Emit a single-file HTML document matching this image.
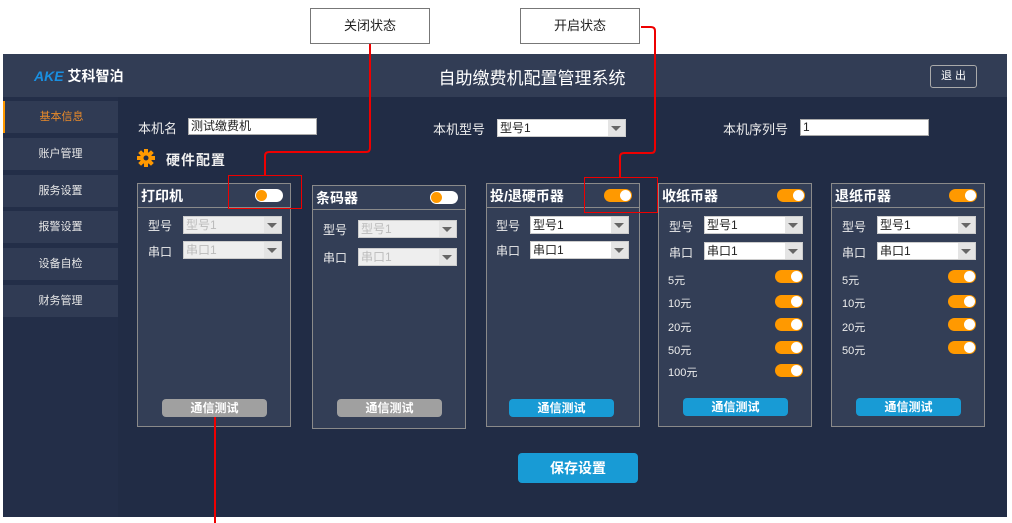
<!DOCTYPE html>
<html><head><meta charset="utf-8"><style>
*{margin:0;padding:0;box-sizing:border-box}
body{width:1012px;height:523px;background:#fff;position:relative;overflow:hidden;font-family:"Liberation Sans","Noto Sans CJK SC",sans-serif;color:#fff}
.a{position:absolute}
.app{left:3px;top:54px;width:1004px;height:463px;background:#212c45}
.hdr{left:3px;top:54px;width:1004px;height:43px;background:#323d55}
.side{left:3px;top:97px;width:115px;height:420px;background:#232e48}
.si{left:3px;width:115px;height:32px;background:#303b54;font-size:11px;text-align:center;line-height:32px;color:#e8e8e8}
.card{width:154px;height:244px;background:#333e56;border:1px solid #8a8a8a}
.card .t{position:absolute;left:0;top:0;width:100%;height:24px;border-bottom:1px solid #8a8a8a;font-size:14px;font-weight:bold;line-height:24px;padding-left:3px}
.tg{position:absolute;width:28px;height:13px;border-radius:7px;background:#f90}
.tg::after{content:"";position:absolute;top:1px;right:1px;width:11px;height:11px;border-radius:50%;background:#fff}
.tg.off{background:#fff}
.tg.off::after{left:1px;right:auto;background:#f90}
.lb{position:absolute;font-size:12px;color:#eee}
.sel{position:absolute;width:99px;height:18px;background:#fff;border:1px solid #ccc;color:#222;font-size:12px;line-height:16px;padding-left:2px}
.sel.dis{background:#eee;color:#bbb}
.sel::after{content:"";position:absolute;right:0;top:0;width:17px;height:16px;background:#e4e4e4}
.sel i{position:absolute;right:4px;top:6px;border-left:5px solid transparent;border-right:5px solid transparent;border-top:5px solid #666;z-index:2}
.btn{position:absolute;width:105px;height:18px;border-radius:4px;background:#189bd5;font-size:12px;font-weight:bold;text-align:center;line-height:18px}
.btn.g{background:#a0a0a0}
.inp{position:absolute;height:17px;background:#fff;border:1px solid #aaa;color:#222;font-size:12px;line-height:15px;padding-left:2px}
.cb{position:absolute;width:120px;height:36px;border:1px solid #777;background:#fff;color:#222;font-size:13px;text-align:center;line-height:34px}
</style></head><body>
<div class="a app"></div>
<div class="a hdr"></div>
<div class="a" style="left:34px;top:66px;font-size:14px;font-weight:bold;"><span style="color:#1a8fe0;font-style:italic">AKE</span> 艾科智泊</div>
<div class="a" style="left:26px;width:1012px;top:64px;text-align:center;font-size:17px;color:#fff">自助缴费机配置管理系统</div>
<div class="a" style="left:930px;top:65px;width:47px;height:23px;border:1px solid #aaa;border-radius:3px;font-size:11px;text-align:center;line-height:21px">退 出</div>
<div class="a side"></div>
<div class="a si" style="top:101px;color:#e88a2a;border-left:2px solid #f90">基本信息</div>
<div class="a si" style="top:138px">账户管理</div>
<div class="a si" style="top:175px">服务设置</div>
<div class="a si" style="top:211px">报警设置</div>
<div class="a si" style="top:248px">设备自检</div>
<div class="a si" style="top:285px">财务管理</div>

<div class="lb" style="left:138px;top:118px;font-size:13px">本机名</div>
<div class="inp" style="left:188px;top:118px;width:129px">测试缴费机</div>
<div class="lb" style="left:433px;top:119px;font-size:13px">本机型号</div>
<div class="sel" style="left:497px;top:119px;width:129px">型号1<i></i></div>
<div class="lb" style="left:723px;top:119px;font-size:13px">本机序列号</div>
<div class="inp" style="left:800px;top:119px;width:129px">1</div>
<svg class="a" style="left:137px;top:149px" width="18" height="18" viewBox="0 0 18 18"><g fill="#f90"><circle cx="9" cy="9" r="6"/><rect x="7" y="0" width="4" height="18"/><rect x="0" y="7" width="18" height="4"/><rect x="7" y="0" width="4" height="18" transform="rotate(45 9 9)"/><rect x="7" y="0" width="4" height="18" transform="rotate(-45 9 9)"/></g><circle cx="9" cy="9" r="2.5" fill="#212c45"/></svg>
<div class="lb" style="left:166px;top:150px;font-size:14px;font-weight:bold;letter-spacing:1px">硬件配置</div>

<div class="a card" style="left:137px;top:183px"><div class="t">打印机</div><div class="tg off" style="left:117px;top:5px"></div>
<div class="lb" style="left:10px;top:33px">型号</div><div class="sel dis" style="left:45px;top:32px">型号1<i></i></div>
<div class="lb" style="left:10px;top:59px">串口</div><div class="sel dis" style="left:45px;top:57px">串口1<i></i></div>
<div class="btn g" style="left:24px;top:215px">通信测试</div></div>
<div class="a card" style="left:312px;top:185px"><div class="t">条码器</div><div class="tg off" style="left:117px;top:5px"></div>
<div class="lb" style="left:10px;top:35px">型号</div><div class="sel dis" style="left:45px;top:34px">型号1<i></i></div>
<div class="lb" style="left:10px;top:63px">串口</div><div class="sel dis" style="left:45px;top:62px">串口1<i></i></div>
<div class="btn g" style="left:24px;top:213px">通信测试</div></div>
<div class="a card" style="left:486px;top:183px"><div class="t">投/退硬币器</div><div class="tg" style="left:117px;top:5px"></div>
<div class="lb" style="left:9px;top:33px">型号</div><div class="sel" style="left:43px;top:32px">型号1<i></i></div>
<div class="lb" style="left:9px;top:58px">串口</div><div class="sel" style="left:43px;top:57px">串口1<i></i></div>
<div class="btn" style="left:22px;top:215px">通信测试</div></div>
<div class="a card" style="left:658px;top:183px"><div class="t">收纸币器</div><div class="tg" style="left:118px;top:5px"></div>
<div class="lb" style="left:10px;top:34px">型号</div><div class="sel" style="left:45px;top:32px">型号1<i></i></div>
<div class="lb" style="left:10px;top:60px">串口</div><div class="sel" style="left:45px;top:58px">串口1<i></i></div>
<div class="lb" style="left:9px;top:88px;font-size:11px">5元</div><div class="tg" style="left:116px;top:86px"></div>
<div class="lb" style="left:9px;top:111px;font-size:11px">10元</div><div class="tg" style="left:116px;top:111px"></div>
<div class="lb" style="left:9px;top:135px;font-size:11px">20元</div><div class="tg" style="left:116px;top:134px"></div>
<div class="lb" style="left:9px;top:158px;font-size:11px">50元</div><div class="tg" style="left:116px;top:157px"></div>
<div class="lb" style="left:9px;top:180px;font-size:11px">100元</div><div class="tg" style="left:116px;top:180px"></div>
<div class="btn" style="left:24px;top:214px">通信测试</div></div>
<div class="a card" style="left:831px;top:183px"><div class="t">退纸币器</div><div class="tg" style="left:117px;top:5px"></div>
<div class="lb" style="left:10px;top:34px">型号</div><div class="sel" style="left:45px;top:32px">型号1<i></i></div>
<div class="lb" style="left:10px;top:60px">串口</div><div class="sel" style="left:45px;top:58px">串口1<i></i></div>
<div class="lb" style="left:10px;top:88px;font-size:11px">5元</div><div class="tg" style="left:116px;top:86px"></div>
<div class="lb" style="left:10px;top:111px;font-size:11px">10元</div><div class="tg" style="left:116px;top:111px"></div>
<div class="lb" style="left:10px;top:135px;font-size:11px">20元</div><div class="tg" style="left:116px;top:134px"></div>
<div class="lb" style="left:10px;top:158px;font-size:11px">50元</div><div class="tg" style="left:116px;top:157px"></div>
<div class="btn" style="left:24px;top:214px">通信测试</div></div>

<div class="btn" style="left:518px;top:453px;width:120px;height:30px;line-height:30px;font-size:14px;border-radius:4px">保存设置</div>

<div class="cb" style="left:310px;top:8px">关闭状态</div>
<div class="cb" style="left:520px;top:8px">开启状态</div>
<svg class="a" style="left:0;top:0" width="1012" height="523">
<g fill="none" stroke="#e00" stroke-width="2">
<path d="M370 44 V148 Q370 152 366 152 H269 Q265 152 265 156 V176"/>
<path d="M641 27 H651 Q655 27 655 31 V149 Q655 153 651 153 H624 Q620 153 620 157 V178"/>
<path d="M215 417 V523"/>
</g>
<rect x="228.5" y="175.5" width="73" height="33" fill="none" stroke="#e00" stroke-width="1"/>
<rect x="584.5" y="177.5" width="73" height="35" fill="none" stroke="#e00" stroke-width="1"/>
</svg>
</body></html>
